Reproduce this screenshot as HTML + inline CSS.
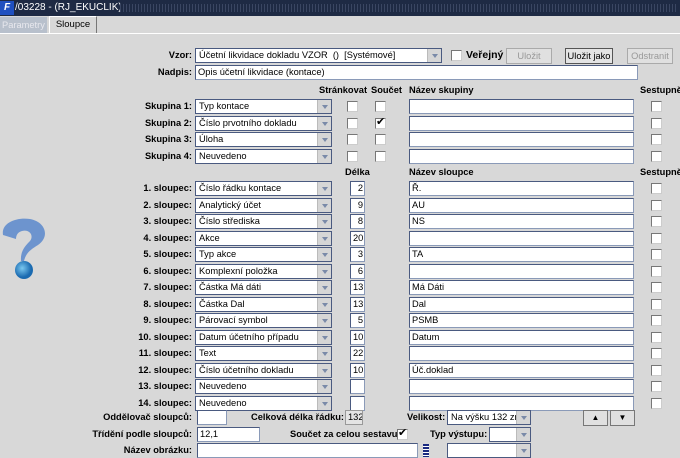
<!DOCTYPE html>
<html><head><meta charset="utf-8"><style>
*{box-sizing:border-box}
body{margin:0;width:680px;height:458px;background:#d8d8d8;font-family:"Liberation Sans",sans-serif;font-size:10px;position:relative;overflow:hidden;color:#000}
.a{position:absolute}
.t{position:absolute;height:16px;top:0;left:0;width:680px;background:#1e2a44}
.lbl{position:absolute;font-weight:bold;font-size:9.3px;text-align:right;white-space:nowrap;line-height:15px}
.in{position:absolute;background:#fff;border:1px solid #8a9ab8;border-top-color:#4a5a80;border-left-color:#4a5a80;height:15px;font-size:9.3px;line-height:13px;padding-left:2px;white-space:nowrap;overflow:hidden}
.sel{position:absolute;background:#fff;border:1px solid #4a5a80;height:15px;font-size:9.3px;line-height:13px;padding-left:3px;white-space:nowrap;overflow:hidden}
.sel:after{content:"";position:absolute;right:0;top:0;width:13px;height:13px;background:#d6d6d6;border-left:1px solid #bbb}
.sel i{position:absolute;right:3px;top:5px;width:0;height:0;border-left:3px solid transparent;border-right:3px solid transparent;border-top:4px solid #7a8aa8;z-index:2}
.cb{position:absolute;width:11px;height:11px;background:#fff;border:1px solid #777;border-right-color:#ccc;border-bottom-color:#ccc}
.btn{position:absolute;height:16px;border:1px solid #aaa;background:#e0e0e0;font-size:9.3px;text-align:center;line-height:14px;color:#999}
.r{text-align:right;padding-right:3px}
</style></head><body>
<div class="t"></div>
<div class="a" style="left:0;top:1px;width:14px;height:14px;background:#2050c0;color:#fff;font-size:10px;font-weight:bold;font-style:italic;line-height:14px;text-align:center">F</div>
<div class="a" style="left:15px;top:1px;color:#fff;font-size:10px;line-height:14px">/03228 - (RJ_EKUCLIK)</div>
<div class="a" style="left:120px;top:4px;width:556px;height:8px;background:repeating-linear-gradient(90deg,#3a4662 0 1px,#1e2a44 1px 3px)"></div>
<div class="a" style="left:0;top:17px;width:47px;height:16px;background:#b8c0cc;color:#e8e8ee;font-size:9.3px;line-height:16px;padding-left:2px">Parametry</div>
<div class="a" style="left:49px;top:16px;width:48px;height:17px;background:#d8d8d8;border:1px solid #fff;border-bottom:none;border-right:1px solid #777;font-size:9.5px;line-height:16px;text-align:center">Sloupce</div>
<div class="a" style="left:0;top:33px;width:680px;height:1px;background:#fff"></div>

<div class="lbl" style="right:488px;top:48px">Vzor:</div>
<div class="sel" style="left:195px;top:48px;width:247px">Účetní likvidace dokladu VZOR &nbsp;() &nbsp;[Systémové]<i></i></div>
<div class="cb" style="left:451px;top:50px"></div>
<div class="lbl" style="left:466px;top:48px;font-size:10.5px">Veřejný</div>
<div class="btn" style="left:506px;top:48px;width:46px">Uložit</div>
<div class="btn" style="left:565px;top:48px;width:48px;color:#000;border-color:#555;background:#e4e4e4">Uložit jako</div>
<div class="btn" style="left:627px;top:48px;width:46px">Odstranit</div>
<div class="lbl" style="right:488px;top:65px">Nadpis:</div>
<div class="in" style="left:195px;top:65px;width:443px">Opis účetní likvidace (kontace)</div>

<div class="lbl" style="left:319px;top:83px">Stránkovat</div>
<div class="lbl" style="left:371px;top:83px">Součet</div>
<div class="lbl" style="left:409px;top:83px">Název skupiny</div>
<div class="lbl" style="left:640px;top:83px">Sestupně</div>
<div class="lbl" style="left:345px;top:165px">Délka</div>
<div class="lbl" style="left:409px;top:165px">Název sloupce</div>
<div class="lbl" style="left:640px;top:165px">Sestupně</div>

<svg class="a" style="left:0;top:215px" width="50" height="65" viewBox="0 0 50 65">
<defs><radialGradient id="g" cx=".4" cy=".4"><stop offset="0" stop-color="#7ac8f0"/><stop offset="1" stop-color="#1a6ab0"/></radialGradient></defs>
<path d="M3 20 C1 8 16 2 30 4 C46 7 50 22 38 30 C30 35 26 38 24 46 L21 46 C20 36 26 30 30 26 C34 21 30 14 22 16 C18 17 16 20 16 24 Z" fill="#5a88cc" opacity=".85"/>
<circle cx="24" cy="55" r="9" fill="url(#g)"/>
</svg>

<div id="rows"></div>

<div class="lbl" style="right:488px;top:410px">Oddělovač sloupců:</div>
<div class="in" style="left:197px;top:410px;width:30px"></div>
<div class="lbl" style="left:251px;top:410px">Celková délka řádku:</div>
<div class="in r" style="left:345px;top:410px;width:18px;background:#e4e4e4;border-color:#999;padding-right:1px">132</div>
<div class="lbl" style="left:407px;top:410px">Velikost:</div>
<div class="sel" style="left:447px;top:410px;width:84px">Na výšku 132 zn.<i></i></div>
<div class="btn" style="left:583px;top:410px;width:25px;border-color:#777;color:#000;font-size:8px">▲</div>
<div class="btn" style="left:610px;top:410px;width:25px;border-color:#777;color:#000;font-size:8px">▼</div>
<div class="lbl" style="right:488px;top:427px">Třídění podle sloupců:</div>
<div class="in" style="left:197px;top:427px;width:63px">12,1</div>
<div class="lbl" style="left:290px;top:427px">Součet za celou sestavu:</div>
<div class="cb" style="left:397px;top:429px"></div><div class="a" style="left:398px;top:426px;font-size:11px">✔</div>
<div class="lbl" style="left:430px;top:427px">Typ výstupu:</div>
<div class="sel" style="left:489px;top:427px;width:42px"><i></i></div>
<div class="lbl" style="right:488px;top:443px">Název obrázku:</div>
<div class="in" style="left:197px;top:443px;width:221px"></div>
<div class="a" style="left:423px;top:444px;width:6px;height:13px;background:repeating-linear-gradient(#1a2a80 0 2px,#fff 2px 3px)"></div>
<div class="sel" style="left:447px;top:443px;width:84px"><i></i></div>

<script>
var h='';
function sel(x,y,w,t){return '<div class="sel" style="left:'+x+'px;top:'+y+'px;width:'+w+'px">'+t+'<i></i></div>';}
function cb(x,y){return '<div class="cb" style="left:'+x+'px;top:'+y+'px"></div>';}
var sk=['Typ kontace','Číslo prvotního dokladu','Úloha','Neuvedeno'];
for(var i=0;i<4;i++){var y=Math.round(99+i*16.6);
h+='<div class="lbl" style="right:488px;top:'+y+'px">Skupina '+(i+1)+':</div>';
h+=sel(195,y,137,sk[i]);
h+=cb(347,y+2)+cb(375,y+2)+cb(651,y+2);
h+='<div class="in" style="left:409px;top:'+y+'px;width:225px"></div>';
if(i==1)h+='<div class="a" style="left:376px;top:'+(y-1)+'px;font-size:11px">✔</div>';}
var c=[['Číslo řádku kontace','2','Ř.'],['Analytický účet','9','AU'],['Číslo střediska','8','NS'],['Akce','20',''],['Typ akce','3','TA'],['Komplexní položka','6',''],['Částka Má dáti','13','Má Dáti'],['Částka Dal','13','Dal'],['Párovací symbol','5','PSMB'],['Datum účetního případu','10','Datum'],['Text','22',''],['Číslo účetního dokladu','10','Úč.doklad'],['Neuvedeno','',''],['Neuvedeno','','']];
for(var i=0;i<14;i++){var y=Math.round(181+i*16.5);
h+='<div class="lbl" style="right:488px;top:'+y+'px">'+(i+1)+'. sloupec:</div>';
h+=sel(195,y,137,c[i][0]);
h+='<div class="in r" style="left:350px;top:'+y+'px;width:15px;padding-right:1px">'+c[i][1]+'</div>';
h+='<div class="in" style="left:409px;top:'+y+'px;width:225px">'+c[i][2]+'</div>';
h+=cb(651,y+2);}
document.getElementById('rows').innerHTML=h;
</script>
</body></html>
